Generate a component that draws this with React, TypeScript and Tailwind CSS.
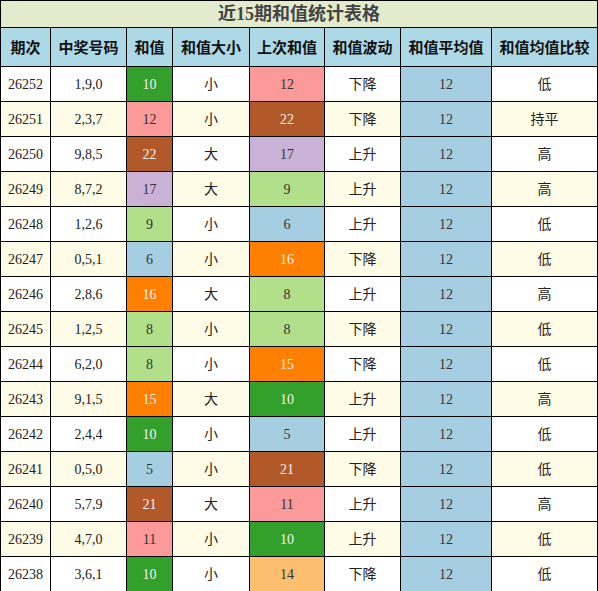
const rows: [string, string, number, string, number, string, string][] = [
  ["26252", "1,9,0", 10, "小", 12, "下降", "低"],
  ["26251", "2,3,7", 12, "小", 22, "下降", "持平"],
  ["26250", "9,8,5", 22, "大", 17, "上升", "高"],
  ["26249", "8,7,2", 17, "大", 9, "上升", "高"],
  ["26248", "1,2,6", 9, "小", 6, "上升", "低"],
  ["26247", "0,5,1", 6, "小", 16, "下降", "低"],
  ["26246", "2,8,6", 16, "大", 8, "上升", "高"],
  ["26245", "1,2,5", 8, "小", 8, "下降", "低"],
  ["26244", "6,2,0", 8, "小", 15, "下降", "低"],
  ["26243", "9,1,5", 15, "大", 10, "上升", "高"],
  ["26242", "2,4,4", 10, "小", 5, "上升", "低"],
  ["26241", "0,5,0", 5, "小", 21, "下降", "低"],
  ["26240", "5,7,9", 21, "大", 11, "上升", "高"],
  ["26239", "4,7,0", 11, "小", 10, "上升", "低"],
  ["26238", "3,6,1", 10, "小", 14, "下降", "低"],
];

const sumClass: Record<number, string> = {
  5: "bg-[#a6cee3] text-[#333]",
  6: "bg-[#a6cee3] text-[#333]",
  8: "bg-[#b2df8a] text-[#333]",
  9: "bg-[#b2df8a] text-[#333]",
  10: "bg-[#33a02c] text-[#f2f2f2]",
  11: "bg-[#fb9a99] text-[#333]",
  12: "bg-[#fb9a99] text-[#333]",
  14: "bg-[#fdbf6f] text-[#333]",
  15: "bg-[#ff7f00] text-[#f2f2f2]",
  16: "bg-[#ff7f00] text-[#f2f2f2]",
  17: "bg-[#cab2d6] text-[#333]",
  21: "bg-[#b15928] text-[#f2f2f2]",
  22: "bg-[#b15928] text-[#f2f2f2]",
};

const headers = ["期次", "中奖号码", "和值", "和值大小", "上次和值", "和值波动", "和值平均值", "和值均值比较"];
const widths = [50, 76, 46, 77, 75, 76, 91, 106];

const App = () => {
  return (
    <div className="w-[598px] h-[591px] bg-white font-['Liberation_Serif','Noto_Sans_CJK_SC',serif] text-[14px] text-[#222]">
      <table className="w-[598px] table-fixed border-collapse border border-black">
        <colgroup>
          {widths.map((w, i) => (
            <col key={i} style={{ width: w }} />
          ))}
        </colgroup>
        <thead>
          <tr className="h-[27px] bg-[#e3ebcd]">
            <th colSpan={8} className="border border-black text-[18px] font-bold text-[#444] leading-none">
              近15期和值统计表格
            </th>
          </tr>
          <tr className="h-[39px] bg-[#add8e6]">
            {headers.map((h) => (
              <th key={h} className="border border-black font-bold text-[15px] text-[#111] p-0 font-['Noto_Sans_CJK_SC',sans-serif]">
                {h}
              </th>
            ))}
          </tr>
        </thead>
        <tbody>
          {rows.map((r, i) => (
            <tr key={r[0]} className={`h-[35px] ${i % 2 === 0 ? "bg-white" : "bg-[#fefbe7]"}`}>
              <td className="border border-black text-center p-0">{r[0]}</td>
              <td className="border border-black text-center p-0">{r[1]}</td>
              <td className={`border border-black text-center p-0 ${sumClass[r[2]]}`}>{r[2]}</td>
              <td className="border border-black text-center p-0">{r[3]}</td>
              <td className={`border border-black text-center p-0 ${sumClass[r[4]]}`}>{r[4]}</td>
              <td className="border border-black text-center p-0">{r[5]}</td>
              <td className="border border-black text-center p-0 bg-[#a6cee3] text-[#333]">12</td>
              <td className="border border-black text-center p-0">{r[6]}</td>
            </tr>
          ))}
        </tbody>
      </table>
    </div>
  );
};

export default App;
